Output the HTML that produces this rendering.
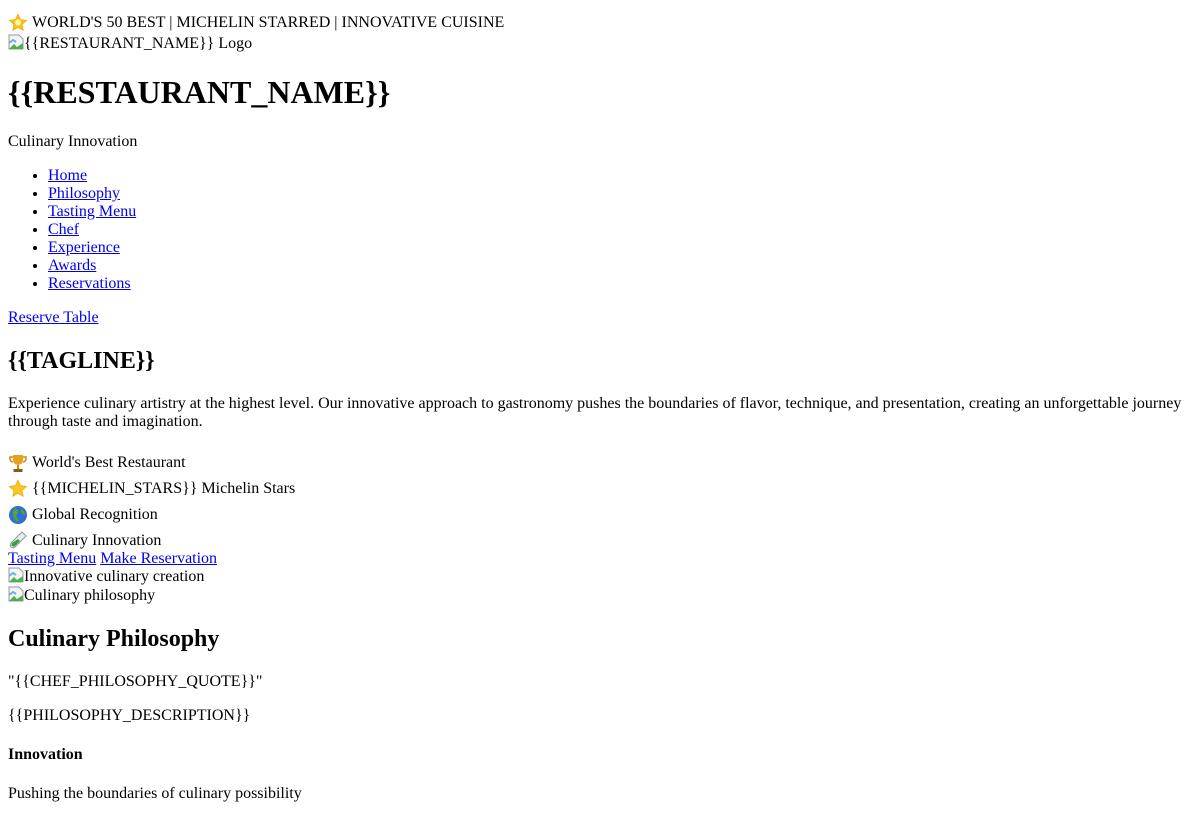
<!DOCTYPE html>
<html><head><meta charset="utf-8"><style>
body{margin:8px;font-family:"Liberation Serif",serif;font-size:16px;line-height:18px;color:#000;background:#fff}
a{color:#0000ee}
h1{font-size:32px;line-height:37px;margin:21.44px 0}
h2{font-size:24px;line-height:28px;margin:19.92px 0}
h4{font-size:16px;line-height:18px;margin:21.28px 0}
p{margin:16px 0}
ul{margin:16px 0;padding-left:40px}
.e{height:26px;line-height:26px;display:flex;align-items:center}
.e svg{width:20px;height:20px;margin-right:4px;flex:none}
.bi{display:inline-block;width:16px;height:16px;vertical-align:-2px}
</style></head><body>
<div class="e" style="height:23px;padding-top:3px"><svg viewBox="0 0 20 20"><path d="M10 1l2.6 5.6 6 .7-4.5 4.1 1.2 6L10 14.4 4.7 17.4l1.2-6L1.4 7.3l6-.7z" fill="#f7c21e" stroke="#f0a000" stroke-width=".6"/><circle cx="10" cy="9.5" r="3" fill="#fff6b0"/></svg>WORLD'S 50 BEST | MICHELIN STARRED | INNOVATIVE CUISINE</div>
<div><svg class="bi" viewBox="0 0 16 16"><path d="M1 1h10l4 4v10H1z" fill="#f4f4f4" stroke="#999"/><path d="M1 15l5-5 3 3 6-4v6z" fill="#4caf50"/><path d="M1 9l4-3 3 2" fill="none" stroke="#6ab0e8" stroke-width="2"/></svg>{{RESTAURANT_NAME}} Logo</div>
<h1>{{RESTAURANT_NAME}}</h1>
<p>Culinary Innovation</p>
<ul><li><a href="#">Home</a></li><li><a href="#">Philosophy</a></li><li><a href="#">Tasting Menu</a></li><li><a href="#">Chef</a></li><li><a href="#">Experience</a></li><li><a href="#">Awards</a></li><li><a href="#">Reservations</a></li></ul>
<a href="#">Reserve Table</a>
<h2>{{TAGLINE}}</h2>
<p>Experience culinary artistry at the highest level. Our innovative approach to gastronomy pushes the boundaries of flavor, technique, and presentation, creating an unforgettable journey through taste and imagination.</p>
<div class="e" style="padding-top:3px"><svg viewBox="0 0 20 20"><path d="M5 2h10v5a5 5 0 0 1-10 0z" fill="#e5a21a"/><path d="M5 4H2v2a3 3 0 0 0 3 3M15 4h3v2a3 3 0 0 1-3 3" fill="none" stroke="#c98a10" stroke-width="1.5"/><rect x="9" y="12" width="2" height="4" fill="#c98a10"/><rect x="5.5" y="16" width="9" height="3" fill="#8a5a10"/></svg>World's Best Restaurant</div>
<div class="e"><svg viewBox="0 0 20 20"><path d="M10 1l2.6 5.6 6 .7-4.5 4.1 1.2 6L10 14.4 4.7 17.4l1.2-6L1.4 7.3l6-.7z" fill="#f9c623" stroke="#e8a200" stroke-width=".6"/></svg>{{MICHELIN_STARS}} Michelin Stars</div>
<div class="e"><svg viewBox="0 0 20 20"><circle cx="10" cy="10" r="9" fill="#2f6fd0"/><path d="M7 3c3 1 4 4 2 6s1 4 2 7c-2 1-4 0-5-3S4 9 5 6z" fill="#5aa03a"/><path d="M13 4c2 1 4 3 4 6-2 0-3-2-4-3z" fill="#5aa03a"/></svg>Global Recognition</div>
<div class="e" style="margin-bottom:-4px"><svg viewBox="0 0 20 20"><path d="M14 1l4 4L7 16a2.8 2.8 0 0 1-4-4z" fill="#e8eef0" stroke="#8a9aa0"/><path d="M10 8l2 2-5 5a2 2 0 0 1-3-3z" fill="#3ca040"/></svg>Culinary Innovation</div>
<div><a href="#">Tasting Menu</a> <a href="#">Make Reservation</a></div>
<div style="margin-top:-1px"><svg class="bi" viewBox="0 0 16 16"><path d="M1 1h10l4 4v10H1z" fill="#f4f4f4" stroke="#999"/><path d="M1 15l5-5 3 3 6-4v6z" fill="#4caf50"/><path d="M1 9l4-3 3 2" fill="none" stroke="#6ab0e8" stroke-width="2"/></svg>Innovative culinary creation</div>
<div><svg class="bi" viewBox="0 0 16 16"><path d="M1 1h10l4 4v10H1z" fill="#f4f4f4" stroke="#999"/><path d="M1 15l5-5 3 3 6-4v6z" fill="#4caf50"/><path d="M1 9l4-3 3 2" fill="none" stroke="#6ab0e8" stroke-width="2"/></svg>Culinary philosophy</div>
<h2>Culinary Philosophy</h2>
<p>"{{CHEF_PHILOSOPHY_QUOTE}}"</p>
<p>{{PHILOSOPHY_DESCRIPTION}}</p>
<h4>Innovation</h4>
<p>Pushing the boundaries of culinary possibility</p>
</body></html>
